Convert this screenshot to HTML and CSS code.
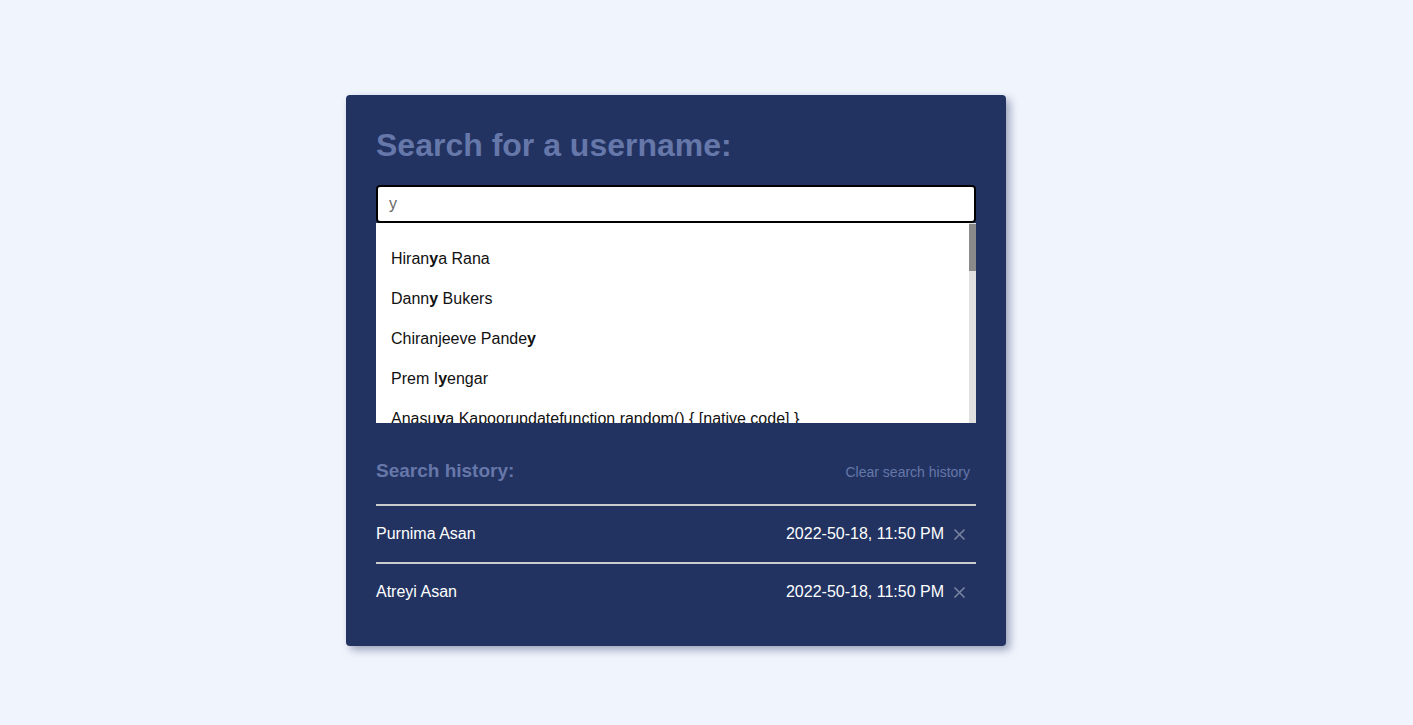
FILE: index.html
```html
<!DOCTYPE html>
<html lang="en">
<head>
<meta charset="utf-8">
<title>Search for a username</title>
<link rel="stylesheet" href="styles.css">
</head>
<body>
<main class="card">
  <h1 class="title">Search for a username:</h1>
  <div class="search">
    <input class="search-input" type="text" value="y">
    <div class="dropdown">
      <ul class="suggestions">
        <li>Hiran<b>y</b>a Rana</li>
        <li>Dann<b>y</b> Bukers</li>
        <li>Chiranjeeve Pande<b>y</b></li>
        <li>Prem I<b>y</b>engar</li>
        <li>Anasu<b>y</b>a Kapoorupdatefunction random() { [native code] }</li>
        <li>Vija<b>y</b> Kumar</li>
        <li>Ajo<b>y</b> Sen</li>
        <li>Uda<b>y</b> Mehta</li>
      </ul>
      <div class="scrollbar" aria-hidden="true"><div class="scroll-thumb"></div></div>
    </div>
  </div>

  <section class="history">
    <div class="history-head">
      <h2 class="history-title">Search history:</h2>
      <button class="clear-btn" type="button">Clear search history</button>
    </div>
    <ul class="history-list">
      <li class="history-row">
        <span class="history-name">Purnima Asan</span>
        <span class="history-meta">
          <span class="history-date">2022-50-18, 11:50 PM</span>
          <button class="remove-btn" type="button" aria-label="Remove">
            <svg width="13" height="13" viewBox="0 0 13 13"><path d="M1.5 1.5 L11.5 11.5 M11.5 1.5 L1.5 11.5" stroke="currentColor" stroke-width="1.6" fill="none"/></svg>
          </button>
        </span>
      </li>
      <li class="history-row">
        <span class="history-name">Atreyi Asan</span>
        <span class="history-meta">
          <span class="history-date">2022-50-18, 11:50 PM</span>
          <button class="remove-btn" type="button" aria-label="Remove">
            <svg width="13" height="13" viewBox="0 0 13 13"><path d="M1.5 1.5 L11.5 11.5 M11.5 1.5 L1.5 11.5" stroke="currentColor" stroke-width="1.6" fill="none"/></svg>
          </button>
        </span>
      </li>
    </ul>
  </section>
</main>
</body>
</html>
```

FILE: styles.css
```css
* { box-sizing: border-box; }

html, body {
  margin: 0;
  padding: 0;
}

body {
  background: #f0f4fd;
  font-family: "Liberation Sans", Arial, sans-serif;
  font-size: 16px;
  color: #ffffff;
  min-height: 725px;
}

.card {
  width: 660px;
  margin: 95px 0 0 346px;
  background: #223362;
  border-radius: 4px;
  padding: 30px 30px 26px;
  box-shadow: 4px 4px 8px rgba(30, 45, 90, 0.4);
}

.title {
  margin: 0;
  font-size: 32px;
  font-weight: bold;
  line-height: 40px;
  color: #6677a9;
}

.search {
  margin-top: 20px;
}

.search-input {
  display: block;
  width: 600px;
  height: 38px;
  margin: 0;
  border: 2px solid #000;
  border-radius: 4px;
  padding: 0 11px;
  font-family: "Liberation Sans", Arial, sans-serif;
  font-size: 16px;
  color: #666;
  background: #fff;
  outline: none;
}

.dropdown {
  display: flex;
  height: 200px;
  background: #fff;
}

.suggestions {
  flex: 1;
  list-style: none;
  margin: 0;
  padding: 16px 0 0;
  overflow: hidden;
  color: #111;
}

.suggestions li {
  height: 40px;
  line-height: 40px;
  padding: 0 15px;
  white-space: nowrap;
}

.suggestions b {
  font-weight: bold;
}

.scrollbar {
  width: 7px;
  flex: none;
  background: #e0e0e0;
  padding-top: 1px;
}

.scroll-thumb {
  height: 47px;
  background: #8a8a8a;
}

.history {
  margin-top: 32px;
}

.history-head {
  display: flex;
  justify-content: space-between;
  align-items: center;
  height: 51px;
  border-bottom: 2px solid #cccccc;
  padding-bottom: 17px;
}

.history-title {
  margin: 0;
  font-size: 19px;
  font-weight: bold;
  color: #6677a9;
}

.clear-btn {
  background: none;
  border: none;
  padding: 0 6px 0 0;
  margin-top: 2px;
  font-family: "Liberation Sans", Arial, sans-serif;
  font-size: 14px;
  color: #6677a9;
  cursor: pointer;
}

.history-list {
  list-style: none;
  margin: 0;
  padding: 0;
}

.history-row {
  display: flex;
  justify-content: space-between;
  align-items: center;
  height: 58px;
  border-bottom: 2px solid #cccccc;
}

.history-row:last-child {
  border-bottom: none;
  height: 56px;
}

.history-meta {
  display: flex;
  align-items: center;
}

.remove-btn {
  display: flex;
  align-items: center;
  justify-content: center;
  width: 13px;
  height: 13px;
  margin: 0 10px 0 9px;
  padding: 0;
  background: none;
  border: none;
  color: #78839f;
  cursor: pointer;
}
```
